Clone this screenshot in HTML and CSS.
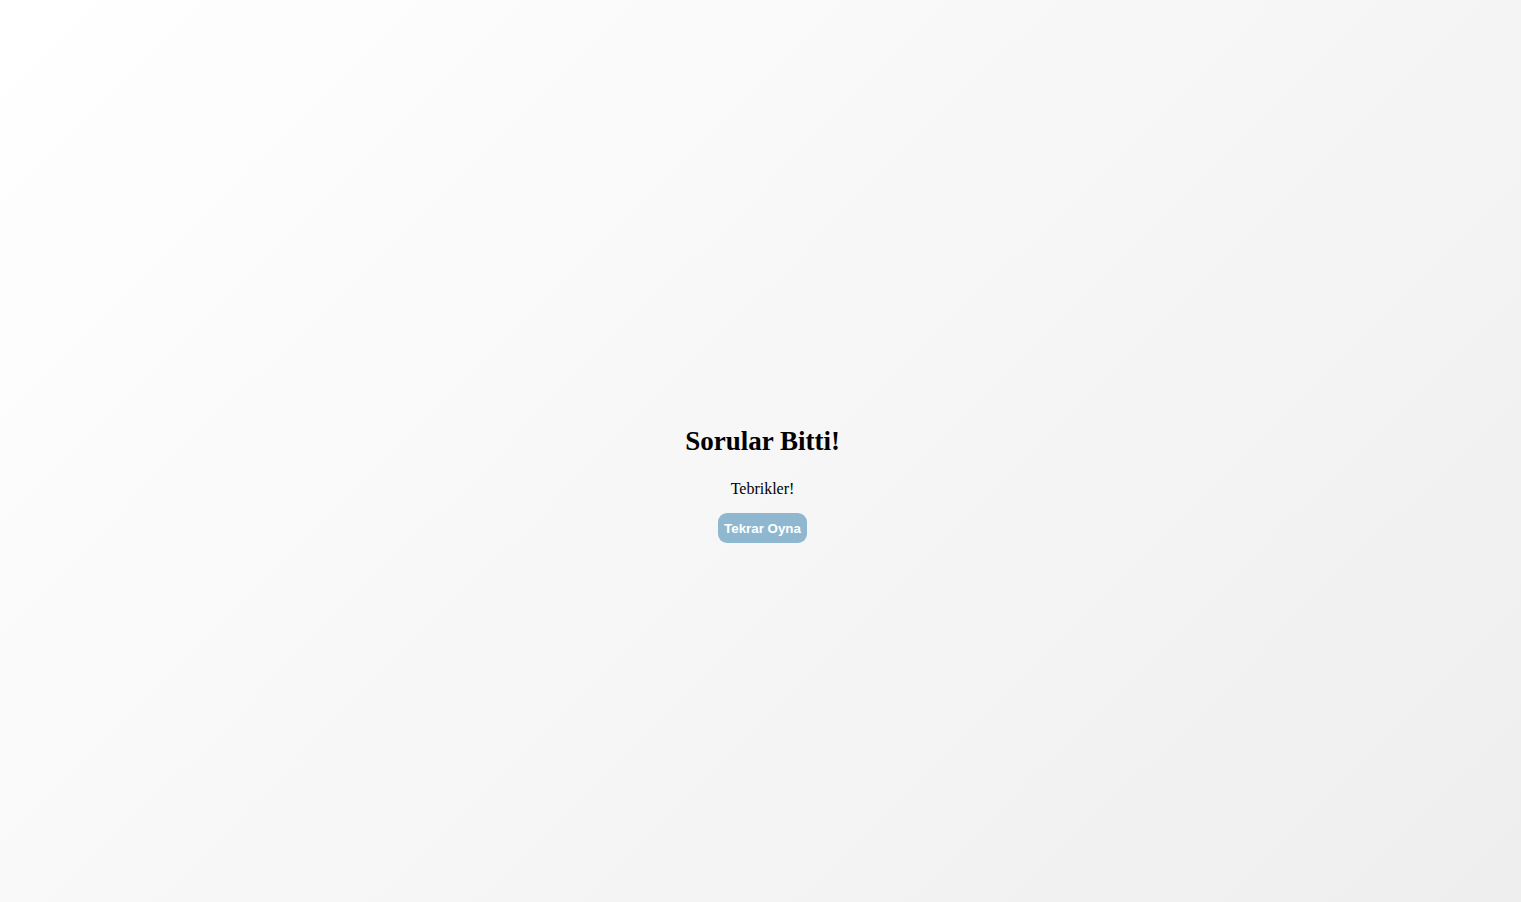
FILE: index.html
```html
<!DOCTYPE html>
<html lang="tr">
<head>
<meta charset="utf-8">
<title>Sorular Bitti</title>
<link rel="stylesheet" href="styles.css">
</head>
<body>
<main class="screen">
  <section class="finish">
    <h1 class="finish-title">Sorular Bitti!</h1>
    <p class="finish-text">Tebrikler!</p>
    <button class="replay-btn" type="button">Tekrar Oyna</button>
  </section>
</main>
</body>
</html>
```
FILE: styles.css
```css
html, body {
  margin: 0;
  padding: 0;
  height: 100%;
}
body {
  background: linear-gradient(135deg, #ffffff 0%, #eeeeee 100%);
  font-family: "Liberation Serif", "DejaVu Serif", serif;
  color: #000;
}
.screen {
  min-height: 100vh;
  display: flex;
  align-items: center;
  justify-content: center;
}
.finish {
  display: flex;
  flex-direction: column;
  align-items: center;
  padding-top: 66px;
  padding-left: 4px;
}
.finish-title {
  font-size: 27px;
  font-weight: bold;
  margin: 0;
  line-height: 32px;
}
.finish-text {
  font-size: 16px;
  margin: 22px 0 0;
  line-height: 20px;
}
.replay-btn {
  margin-top: 14px;
  width: 89px;
  height: 30px;
  border: none;
  border-radius: 9px;
  background: #8fb8d0;
  color: #fff;
  font-family: "Liberation Sans", Arial, sans-serif;
  font-weight: bold;
  font-size: 13.333px;
  padding: 0;
}
```
